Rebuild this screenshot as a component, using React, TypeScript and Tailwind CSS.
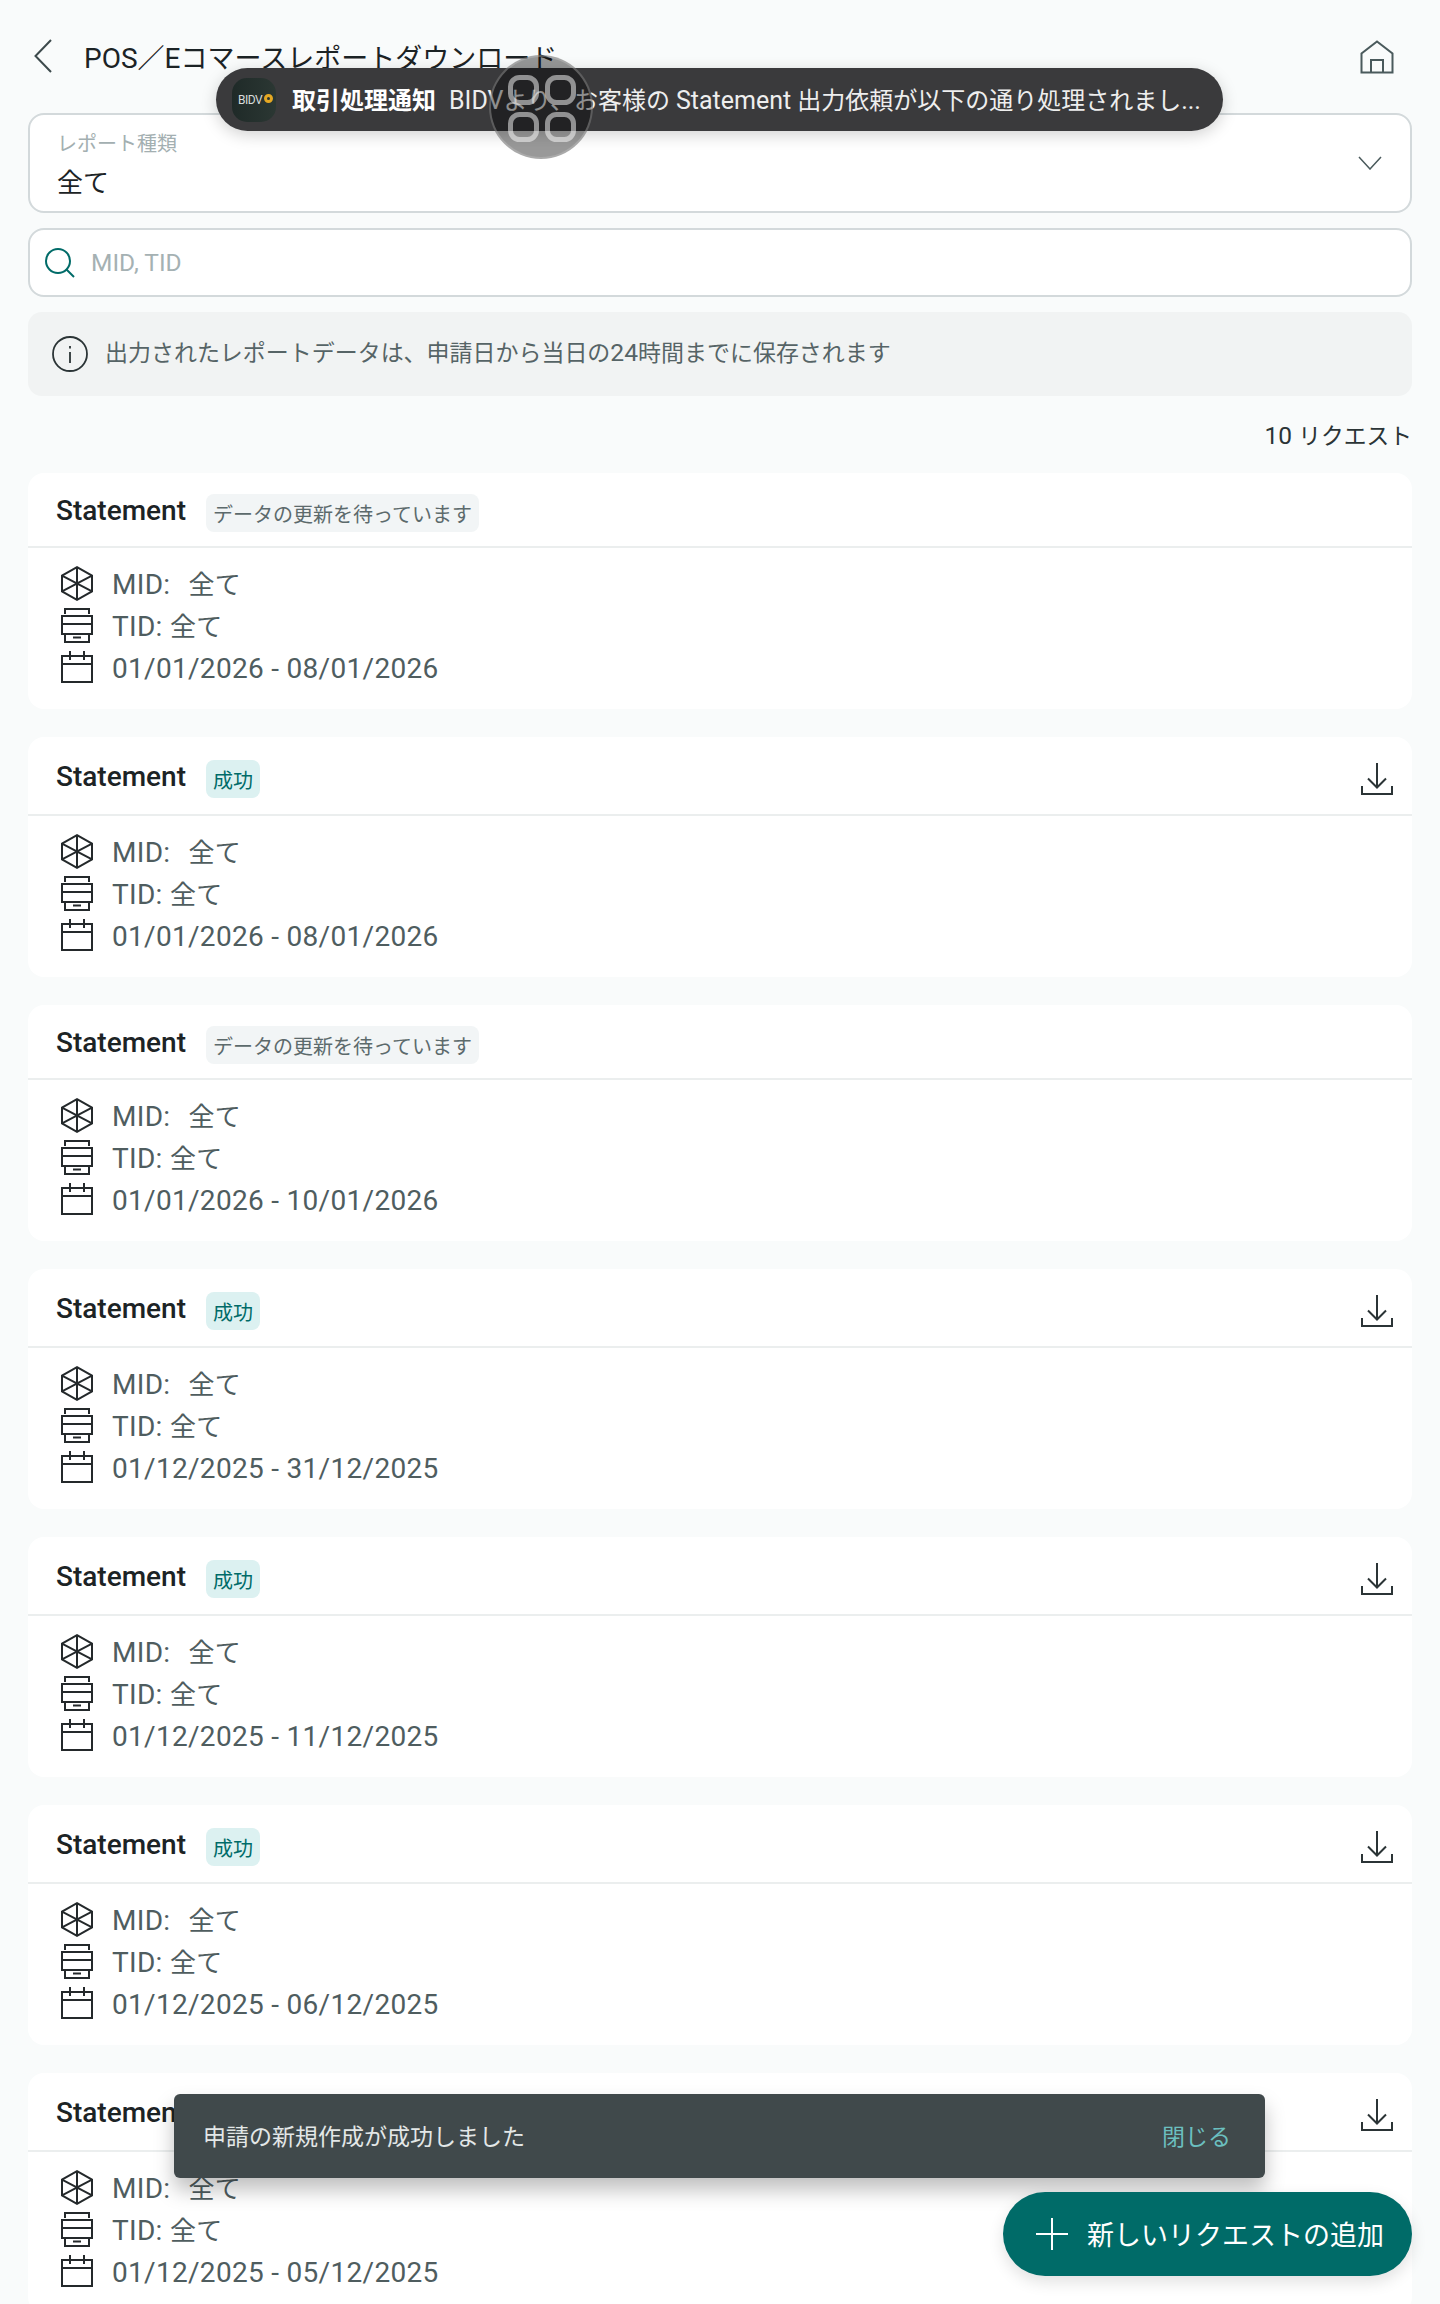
import React from "react";

const CJK = /([\u3000-\u9fff\uff00-\uffef]+)/;

function T({ children }: { children: string }) {
  return (
    <>
      {children.split(CJK).map((part, i) =>
        CJK.test(part) ? (
          <span key={i} className="text-[0.93em]">
            {part}
          </span>
        ) : (
          <React.Fragment key={i}>{part}</React.Fragment>
        )
      )}
    </>
  );
}

function Cube() {
  return (
    <svg width="32" height="35" viewBox="0 0 32 35" fill="none" stroke="#24292b" strokeWidth="2" className="shrink-0">
      <path d="M16 1.2 31 9.6v15.8L16 33.8 1 25.4V9.6z" />
      <path d="M16 1.2v32.6M1 9.6l30 15.8M31 9.6 1 25.4" />
    </svg>
  );
}

function Printer() {
  return (
    <svg width="32" height="35" viewBox="0 0 32 35" fill="none" stroke="#24292b" strokeWidth="2" className="shrink-0">
      <path d="M4 6V1h24v5" />
      <path d="M1 8h30v18H1z" />
      <path d="M1 16h30" />
      <path d="M4 27v7h24v-7" />
      <path d="M12 29.5h8" />
    </svg>
  );
}

function Calendar() {
  return (
    <svg width="32" height="32" viewBox="0 0 32 32" fill="none" stroke="#24292b" strokeWidth="2" className="shrink-0">
      <path d="M1 5h30v26H1z" />
      <path d="M1 13h30" />
      <path d="M9 0v9M23 0v9" />
    </svg>
  );
}

function Download() {
  return (
    <svg width="32" height="32" viewBox="0 0 32 32" fill="none" stroke="#2b3436" strokeWidth="2" className="shrink-0">
      <path d="M16 0v24M7 15.5l9 9 9-9" />
      <path d="M1 23v8h30v-8" />
    </svg>
  );
}

type Item = { waiting: boolean; date: string };

const items: Item[] = [
  { waiting: true, date: "01/01/2026 - 08/01/2026" },
  { waiting: false, date: "01/01/2026 - 08/01/2026" },
  { waiting: true, date: "01/01/2026 - 10/01/2026" },
  { waiting: false, date: "01/12/2025 - 31/12/2025" },
  { waiting: false, date: "01/12/2025 - 11/12/2025" },
  { waiting: false, date: "01/12/2025 - 06/12/2025" },
  { waiting: false, date: "01/12/2025 - 05/12/2025" },
];

function Row({ icon, children }: { icon: React.ReactNode; children: React.ReactNode }) {
  return (
    <div className="flex h-[42px] items-center">
      <div className="mb-[4px] flex w-[32px] shrink-0 justify-center">{icon}</div>
      <div className="ml-[19px] text-[28px] leading-[42px] tracking-[0.3px] text-[#4f5d5f]">{children}</div>
    </div>
  );
}

function Card({ item }: { item: Item }) {
  return (
    <div className="shrink-0 rounded-[16px] bg-white">
      <div
        className={
          item.waiting
            ? "flex h-[75px] items-center border-b-2 border-[#ebeeee] pt-[7px] pr-[19px] pl-[28px]"
            : "flex h-[79px] items-center border-b-2 border-[#ebeeee] pt-[7px] pr-[19px] pl-[28px]"
        }
      >
        <div className="mb-[5px] text-[28px] leading-[36px] font-medium text-[#1c2325]">Statement</div>
        {item.waiting ? (
          <div className="ml-[20px] flex h-[38px] w-[273px] items-center justify-center rounded-[8px] bg-[#f2f5f6] pt-[3px] text-[20px] text-[#5c6a6c]">
            データの更新を待っています
          </div>
        ) : (
          <div className="ml-[20px] flex h-[38px] w-[54px] items-center justify-center rounded-[8px] bg-[#dcf1f1] pt-[3px] text-[20px] text-[#006b68]">
            成功
          </div>
        )}
        {!item.waiting && (
          <div className="ml-auto">
            <Download />
          </div>
        )}
      </div>
      <div className="px-[33px] pt-[16px] pb-[19px]">
        <Row icon={<Cube />}>
          MID:
          <span className="ml-[18px]">
            <T>全て</T>
          </span>
        </Row>
        <Row icon={<Printer />}>
          <T>TID: 全て</T>
        </Row>
        <Row icon={<Calendar />}>{item.date}</Row>
      </div>
    </div>
  );
}

export default function App() {
  return (
    <div
      className="relative h-[2304px] w-[1440px] overflow-hidden bg-[#f9fbfb]"
      style={{ fontFamily: 'Roboto, "Noto Sans CJK JP", sans-serif' }}
    >
      <div className="flex h-[473px] flex-col px-[28px]">
        <header className="flex h-[113px] shrink-0 items-start pt-[39px]">
          <svg width="18" height="34" viewBox="0 0 18 34" fill="none" stroke="#3d4a4c" strokeWidth="2" className="ml-[6px] shrink-0">
            <path d="M17 1 1.5 17 17 33" />
          </svg>
          <h1 className="ml-[32px] text-[28px] leading-[40px] font-normal text-[#1c2325]">
            POS<span className="text-[27px]">／</span>E<span className="text-[27px]">コマースレポートダウンロード</span>
          </h1>
          <svg width="34" height="34" viewBox="0 0 34 34" fill="none" stroke="#4a5a5c" strokeWidth="2" className="mt-[1px] mr-[18px] ml-auto shrink-0">
            <path d="M1.5 32.5V13.5L17 1.5l15.500 12v19z" />
            <path d="M11 32.500V20h12v12.500" />
          </svg>
        </header>

        <div className="flex h-[100px] shrink-0 items-center justify-between rounded-[16px] border-2 border-[#d3d9db] bg-white pr-[28px] pl-[27px]">
          <div className="pt-[4px]">
            <div className="text-[20px] leading-[28px] text-[#a3afb1]">レポート種類</div>
            <div className="mt-[7px] text-[26px] leading-[36px] text-[#1c2325]">全て</div>
          </div>
          <svg width="24" height="14" viewBox="0 0 24 14" fill="none" stroke="#4a5a5c" strokeWidth="1.500">
            <path d="M1 1l11 12L23 1" />
          </svg>
        </div>

        <div className="mt-[15px] flex h-[69px] shrink-0 items-center rounded-[16px] border-2 border-[#d3d9db] bg-white pl-[15px]">
          <svg width="30" height="30" viewBox="0 0 30 30" fill="none" stroke="#006b68" strokeWidth="2">
            <circle cx="13" cy="13" r="12" />
            <path d="M21.500 21.500 29 29" />
          </svg>
          <span className="ml-[16px] pt-[2px] text-[24.5px] text-[#a5b1b3]">MID, TID</span>
        </div>

        <div className="mt-[15px] flex h-[84px] shrink-0 items-center rounded-[14px] bg-[#f1f3f3] pl-[24px]">
          <svg width="36" height="36" viewBox="0 0 36 36" fill="none" stroke="#2b3436" strokeWidth="1.800">
            <circle cx="18" cy="18" r="17" />
            <path d="M18 16v11M18 10v2.500" />
          </svg>
          <span className="mb-[3px] ml-[17px] text-[24.7px] text-[#566466]">
            <T>出力されたレポートデータは、申請日から当日の24時間までに保存されます</T>
          </span>
        </div>

        <div className="mt-[24px] text-right text-[24.5px] leading-[32px] text-[#2b3436]">
          <T>10 リクエスト</T>
        </div>
      </div>

      <div className="flex flex-col gap-[28px] px-[28px]">
        {items.map((item, i) => (
          <Card key={i} item={item} />
        ))}
      </div>

      {/* notification pill */}
      <div className="absolute top-[68px] left-[216px] flex h-[63px] w-[1007px] items-center rounded-[32px] bg-[#3a3a3c] pl-[16px] shadow-[0_4px_16px_rgba(0,0,0,0.18)]">
        <div className="relative flex h-[44px] w-[44px] shrink-0 items-center justify-center rounded-[15px] bg-gradient-to-r from-[#1f2a28] to-[#2b3733]">
          <span className="mr-[8px] text-[12px] tracking-[-0.5px] text-[#d8dcdb]">BIDV</span>
          <span className="absolute top-[16px] right-[3px] h-[9px] w-[9px] rounded-full border-[3px] border-[#e5a823]" />
        </div>
        <span className="ml-[16px] pt-[3px] text-[24px] font-bold text-white">取引処理通知</span>
        <span className="ml-[13px] pt-[3px] text-[24px] whitespace-nowrap text-[#eeeeee]">
          <span className="text-[25px]">BIDV</span>より、お客様の <span className="text-[25px]">Statement</span> 出力依頼が以下の通り処理されまし<span className="text-[25px]">...</span>
        </span>
      </div>

      {/* floating assistive button */}
      <div className="absolute top-[55px] left-[489px] h-[104px] w-[104px] rounded-full border-2 border-[rgba(200,200,200,0.35)] bg-[rgba(0,0,0,0.4)]">
        <svg width="100" height="100" viewBox="0 0 100 100" fill="none" stroke="rgba(255,255,255,0.5)" strokeWidth="5" className="absolute top-0 left-0">
          <rect x="19.500" y="20.500" width="26" height="25" rx="9" />
          <rect x="56.500" y="20.500" width="26" height="25" rx="9" />
          <rect x="19.500" y="57.500" width="26" height="25" rx="9" />
          <rect x="56.500" y="57.500" width="26" height="25" rx="9" />
        </svg>
      </div>

      {/* snackbar */}
      <div className="absolute top-[2094px] left-[174px] flex h-[84px] w-[1091px] items-center justify-between rounded-[6px] bg-[#40494b] pt-[4px] pr-[34px] pl-[29px] shadow-[0_12px_20px_rgba(0,0,0,0.25)]">
        <span className="text-[23px] text-[#e3e7e7]">申請の新規作成が成功しました</span>
        <span className="text-[23px] text-[#6bbfbf]">閉じる</span>
      </div>

      {/* add button */}
      <div className="absolute top-[2192px] left-[1003px] flex h-[84px] w-[409px] items-center rounded-[42px] bg-[#006b68] pl-[33px] shadow-[0_6px_16px_rgba(0,0,0,0.12)]">
        <svg width="32" height="32" viewBox="0 0 32 32" fill="none" stroke="#ffffff" strokeWidth="2">
          <path d="M16 0v32M0 16h32" />
        </svg>
        <span className="ml-[19px] pt-[5px] text-[27px] text-white">新しいリクエストの追加</span>
      </div>
    </div>
  );
}
